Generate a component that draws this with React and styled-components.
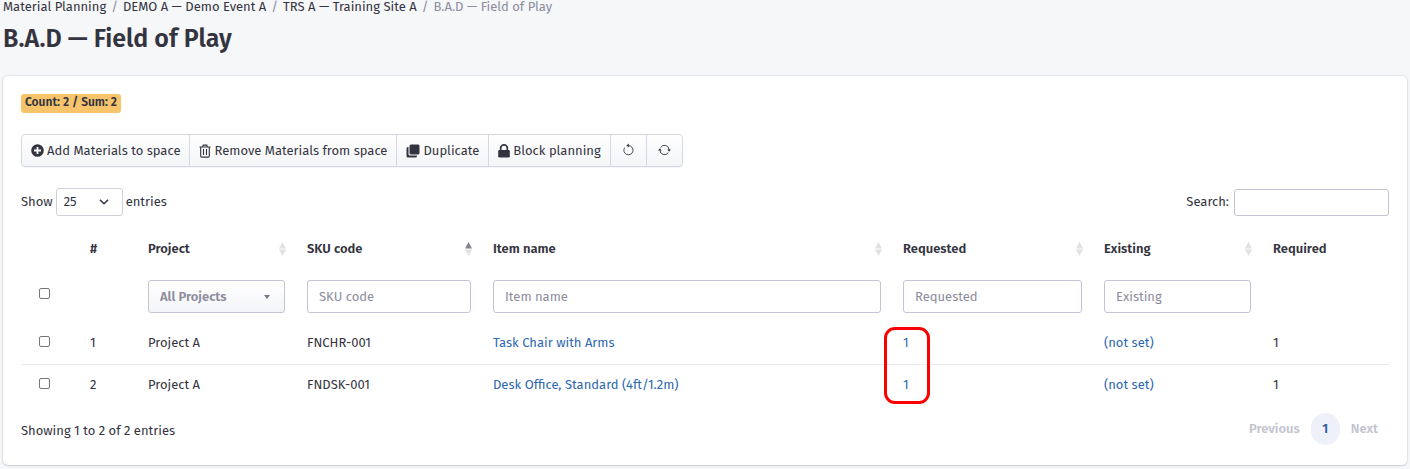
import React from "react";
import styled, { createGlobalStyle, css } from "styled-components";

const GlobalStyle = createGlobalStyle`
  *, *::before, *::after { box-sizing: border-box; }
  body {
    margin: 0;
    background: #f6f7f9;
    color: #343440;
    font-family: "Fira Sans", "Noto Sans", sans-serif;
    font-size: 13px;
    line-height: 20px;
  }
  button, input, select { font: inherit; color: inherit; margin: 0; }
`;

const Page = styled.div`
  padding: 0 3px 4px;
`;

const Breadcrumbs = styled.nav`
  display: flex;
  height: 16px;
  line-height: 14px;
  white-space: nowrap;
`;

const Crumb = styled.a`
  color: #343440;
  text-decoration: none;
`;

const CurrentCrumb = styled.span`
  color: #8c8c9c;
`;

const Slash = styled.span`
  padding: 0 5px;
  color: #8c8c9c;
`;

const Title = styled.h1`
  margin: 7px 0 21px;
  font-size: 25px;
  line-height: 32px;
  font-weight: 600;
`;

const Card = styled.main`
  background: #fff;
  border-radius: 5px;
  box-shadow: 0 0 2px rgba(40, 40, 80, 0.24), 0 1px 2px rgba(40, 40, 80, 0.12);
  padding: 18px 18px 20px;
`;

const Badge = styled.div`
  width: fit-content;
  padding: 0 4px;
  border-radius: 3px;
  background: #f7c46c;
  font-size: 12px;
  line-height: 17px;
  height: 19px;
  font-weight: 600;
`;

const Toolbar = styled.div`
  display: flex;
  width: fit-content;
  margin-top: 21px;
  border: 1px solid #d5d8e4;
  border-radius: 4px;
  background: linear-gradient(#fff, #f4f5f8);
  box-shadow: 0 1px 1px rgba(40, 40, 80, 0.05);
`;

const ToolButton = styled.button`
  display: flex;
  align-items: center;
  justify-content: center;
  gap: 3px;
  height: 31px;
  padding: ${(p) => (p.$iconOnly ? "0 11px 2px" : "0 9px")};
  border: 0;
  background: none;
  white-space: nowrap;
  & + & { border-left: 1px solid #d5d8e4; }
  svg { flex: none; }
`;

const Controls = styled.div`
  display: flex;
  align-items: center;
  justify-content: space-between;
  margin-top: 21px;
`;

const ControlLabel = styled.label`
  display: flex;
  align-items: center;
  gap: ${(p) => p.$gap}px;
`;

const SelectWrap = styled.span`
  display: grid;
  align-items: center;
  > * { grid-area: 1 / 1; }
  svg {
    justify-self: end;
    margin-right: ${(p) => p.$inset}px;
    pointer-events: none;
  }
`;

const field = css`
  border: 1px solid #c4c4d6;
  border-radius: 3px;
  background: #fff;
  outline: none;
`;

const LengthSelect = styled.select`
  ${field}
  appearance: none;
  width: 67px;
  height: 28px;
  padding: 0 7px;
  border-color: #ced0dc;
`;

const SearchInput = styled.input`
  ${field}
  width: 155px;
  height: 27px;
  padding: 0 8px;
`;

const Table = styled.table`
  width: 100%;
  margin-top: 14px;
  border-collapse: collapse;
  table-layout: fixed;
`;

const Col = styled.col`
  width: ${(p) => (p.$width ? `${p.$width}px` : "auto")};
`;

const HeadCell = styled.th`
  height: 37px;
  padding: 0 10px 0 11px;
  text-align: left;
  font-weight: 600;
`;

const HeadContent = styled.div`
  display: flex;
  align-items: center;
  justify-content: space-between;
`;

const FilterCell = styled.td`
  height: 56px;
  padding: 3px 11px 0;
`;

const FilterInput = styled.input`
  ${field}
  display: block;
  width: 100%;
  height: 33px;
  padding: 0 11px;
  &::placeholder { color: #8c8c9c; opacity: 1; }
`;

const ProjectSelect = styled.select`
  ${field}
  appearance: none;
  width: 100%;
  height: 33px;
  padding: 0 11px;
  background: linear-gradient(#fff, #f4f5f8);
  color: #8c8c9c;
  font-weight: 600;
`;

const CheckCell = styled.td`
  padding: 0 0 3px 18px;
`;

const Checkbox = styled.input`
  appearance: none;
  display: block;
  width: 11px;
  height: 11px;
  border: 1px solid #767680;
  border-radius: 2px;
  background: #fff;
  &:checked { background: #2d65ac; }
`;

const Row = styled.tr`
  & + & { border-top: 1px solid #e9e9ee; }
`;

const Cell = styled.td`
  position: relative;
  height: 41px;
  padding: 0 11px;
`;

const CellLink = styled.a`
  color: #2d68ae;
  text-decoration: none;
`;

const Highlight = styled.span`
  position: absolute;
  top: 4px;
  left: -8px;
  z-index: 1;
  width: 46px;
  height: 77px;
  border: 3px solid #fa0000;
  border-radius: 11px;
  pointer-events: none;
`;

const Footer = styled.footer`
  display: flex;
  align-items: center;
  justify-content: space-between;
  margin-top: 8px;
`;

const Summary = styled.span`
  padding-top: 4px;
`;

const Pagination = styled.nav`
  display: flex;
  align-items: center;
`;

const PageButton = styled.button`
  height: 32px;
  min-width: 29px;
  padding: 0 11px;
  border: 0;
  border-radius: 16px;
  background: ${(p) => (p.$current ? "#eef1f9" : "none")};
  color: ${(p) => (p.$current ? "#2d5ca0" : "#c4c5ce")};
  font-weight: 600;
`;

const PlusIcon = () => (
  <svg width="13" height="13" viewBox="0 0 13 13" aria-hidden="true">
    <circle cx="6.5" cy="6.5" r="6.3" fill="#343440" />
    <path d="M6.5 3v7M3 6.5h7" stroke="#fff" strokeWidth="1.8" />
  </svg>
);

const TrashIcon = () => (
  <svg width="12" height="14" viewBox="0 0 12 14" fill="none" stroke="#343440" aria-hidden="true">
    <path d="M.5 3h11M3.5 3l.7-1.9h3.6L8.5 3M1.7 3v9.1q0 1 1 1h6.6q1 0 1-1V3M4.5 5v6M7.5 5v6" strokeWidth="1.1" />
  </svg>
);

const CopyIcon = () => (
  <svg width="14" height="14" viewBox="0 0 14 14" fill="#343440" aria-hidden="true">
    <rect x="3.5" y=".5" width="10" height="10" rx="1.5" />
    <path d="M2.5 3H2Q.5 3 .5 4.5V12q0 1.500 1.500 1.500h7.500q1.500 0 1.500-1.500v-.5H4q-1.500 0-1.500-1.500z" />
  </svg>
);

const LockIcon = () => (
  <svg width="12" height="14" viewBox="0 0 12 14" aria-hidden="true">
    <rect x=".2" y="6" width="11.6" height="7.5" rx="1.2" fill="#343440" />
    <path d="M2.7 6.500V4.200a3.300 3.300 0 0 1 6.600 0v2.300" fill="none" stroke="#343440" strokeWidth="1.7" />
  </svg>
);

const ResetIcon = () => (
  <svg width="13" height="14" viewBox="0 0 13 14" fill="none" stroke="#343440" aria-hidden="true">
    <path d="M5.500 2.600h1a4.600 4.600 0 1 1-3.900 2.100" strokeWidth=".9" />
    <path d="M4.400 2.600 6.800.600v4z" fill="#343440" stroke="none" />
  </svg>
);

const RefreshIcon = () => (
  <svg width="13" height="14" viewBox="0 0 13 14" fill="none" stroke="#343440" aria-hidden="true">
    <path d="M2.600 4.500a4.600 4.600 0 0 1 8.500 2.500M10.400 9.500a4.600 4.600 0 0 1-8.500-2.500" strokeWidth=".9" />
    <path d="M9.300 6.500h3.600l-1.800 2.300zM.1 7.500h3.600L1.900 5.200z" fill="#343440" stroke="none" />
  </svg>
);

const ChevronIcon = () => (
  <svg width="10" height="6" viewBox="0 0 10 6" fill="none" aria-hidden="true">
    <path d="M.9.700 5 4.800 9.100.700" stroke="#343440" strokeWidth="1.5" />
  </svg>
);

const CaretIcon = () => (
  <svg width="6" height="4" viewBox="0 0 6 4" aria-hidden="true">
    <path d="M0 0h6L3 4z" fill="#77778a" />
  </svg>
);

const SortIcon = ({ ascending }) => (
  <svg width="7" height="14" viewBox="0 0 7 14" aria-hidden="true">
    <path d="M3.5 0 7 6.5H0z" fill={ascending ? "#85858d" : "#e1e1e4"} />
    <path d="M0 7.5h7L3.5 14z" fill="#e1e1e4" />
  </svg>
);

const columns = [
  { label: "", width: 58 },
  { label: "#", width: 58 },
  { label: "Project", width: 159, sortable: true },
  { label: "SKU code", width: 186, sortable: true, ascending: true, filter: true },
  { label: "Item name", sortable: true, filter: true },
  { label: "Requested", width: 201, sortable: true, filter: true },
  { label: "Existing", width: 169, sortable: true, filter: true },
  { label: "Required", width: 127 },
];

const rows = [
  { id: 1, project: "Project A", sku: "FNCHR-001", item: "Task Chair with Arms" },
  { id: 2, project: "Project A", sku: "FNDSK-001", item: "Desk Office, Standard (4ft/1.2m)" },
];

const crumbs = ["Material Planning", "DEMO A — Demo Event A", "TRS A — Training Site A"];

export default function App() {
  return (
    <>
      <GlobalStyle />
      <Page>
        <Breadcrumbs aria-label="Breadcrumb">
          {crumbs.map((crumb) => (
            <React.Fragment key={crumb}>
              <Crumb href="#">{crumb}</Crumb>
              <Slash>/</Slash>
            </React.Fragment>
          ))}
          <CurrentCrumb>B.A.D — Field of Play</CurrentCrumb>
        </Breadcrumbs>
        <Title>B.A.D — Field of Play</Title>
        <Card>
          <Badge>Count: 2 / Sum: 2</Badge>
          <Toolbar>
            <ToolButton><PlusIcon />Add Materials to space</ToolButton>
            <ToolButton><TrashIcon />Remove Materials from space</ToolButton>
            <ToolButton><CopyIcon />Duplicate</ToolButton>
            <ToolButton><LockIcon />Block planning</ToolButton>
            <ToolButton $iconOnly aria-label="Reset"><ResetIcon /></ToolButton>
            <ToolButton $iconOnly aria-label="Refresh"><RefreshIcon /></ToolButton>
          </Toolbar>
          <Controls>
            <ControlLabel $gap={3}>
              Show
              <SelectWrap $inset={14}>
                <LengthSelect defaultValue="25">
                  <option>10</option>
                  <option>25</option>
                  <option>50</option>
                </LengthSelect>
                <ChevronIcon />
              </SelectWrap>
              entries
            </ControlLabel>
            <ControlLabel $gap={5}>
              Search:
              <SearchInput type="search" />
            </ControlLabel>
          </Controls>
          <Table>
            <colgroup>
              {columns.map((c, i) => <Col key={i} $width={c.width} />)}
            </colgroup>
            <thead>
              <tr>
                {columns.map((c, i) => (
                  <HeadCell key={i} scope="col">
                    <HeadContent>
                      {c.label}
                      {c.sortable && <SortIcon ascending={c.ascending} />}
                    </HeadContent>
                  </HeadCell>
                ))}
              </tr>
              <tr>
                <CheckCell><Checkbox type="checkbox" aria-label="Select all" /></CheckCell>
                <FilterCell />
                <FilterCell>
                  <SelectWrap $inset={15}>
                    <ProjectSelect aria-label="Project">
                      <option>All Projects</option>
                      <option>Project A</option>
                    </ProjectSelect>
                    <CaretIcon />
                  </SelectWrap>
                </FilterCell>
                {columns.slice(3).map((c) => (
                  <FilterCell key={c.label}>
                    {c.filter && <FilterInput placeholder={c.label} aria-label={c.label} />}
                  </FilterCell>
                ))}
              </tr>
            </thead>
            <tbody>
              {rows.map((row, i) => (
                <Row key={row.id}>
                  <CheckCell><Checkbox type="checkbox" aria-label={`Select ${row.item}`} /></CheckCell>
                  <Cell>{row.id}</Cell>
                  <Cell>{row.project}</Cell>
                  <Cell>{row.sku}</Cell>
                  <Cell><CellLink href="#">{row.item}</CellLink></Cell>
                  <Cell>
                    <CellLink href="#">1</CellLink>
                    {i === 0 && <Highlight />}
                  </Cell>
                  <Cell><CellLink href="#">(not set)</CellLink></Cell>
                  <Cell>1</Cell>
                </Row>
              ))}
            </tbody>
          </Table>
          <Footer>
            <Summary>Showing 1 to 2 of 2 entries</Summary>
            <Pagination aria-label="Pages">
              <PageButton disabled>Previous</PageButton>
              <PageButton $current aria-current="page">1</PageButton>
              <PageButton disabled>Next</PageButton>
            </Pagination>
          </Footer>
        </Card>
      </Page>
    </>
  );
}
